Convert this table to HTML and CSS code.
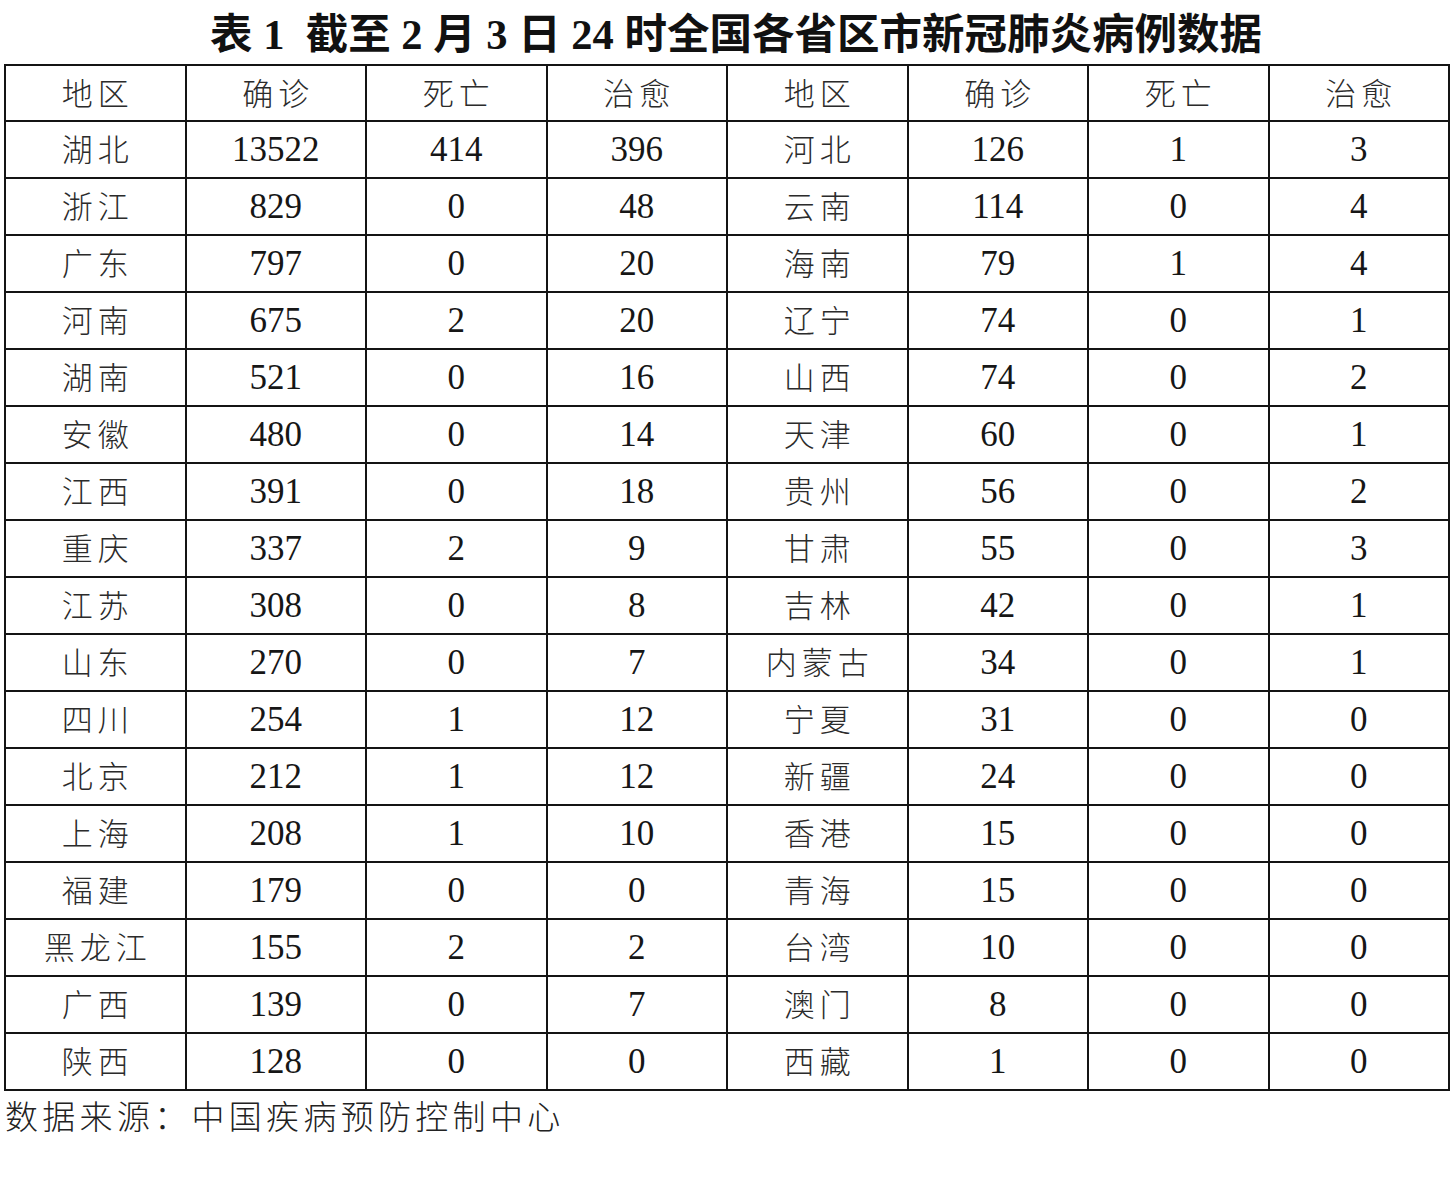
FILE: index.html
```html
<!DOCTYPE html>
<html lang="zh-CN">
<head>
<meta charset="utf-8">
<title>表1 新冠肺炎病例数据</title>
<link rel="stylesheet" href="styles.css">
</head>
<body>
<div class="page">
  <h1 class="title">表 1&nbsp; 截至 2 月 3 日 24 时全国各省区市新冠肺炎病例数据</h1>
  <table class="data">
    <thead>
      <tr><th>地区</th><th>确诊</th><th>死亡</th><th>治愈</th><th>地区</th><th>确诊</th><th>死亡</th><th>治愈</th></tr>
    </thead>
    <tbody>
      <tr><td class="cn">湖北</td><td>13522</td><td>414</td><td>396</td><td class="cn">河北</td><td>126</td><td>1</td><td>3</td></tr>
      <tr><td class="cn">浙江</td><td>829</td><td>0</td><td>48</td><td class="cn">云南</td><td>114</td><td>0</td><td>4</td></tr>
      <tr><td class="cn">广东</td><td>797</td><td>0</td><td>20</td><td class="cn">海南</td><td>79</td><td>1</td><td>4</td></tr>
      <tr><td class="cn">河南</td><td>675</td><td>2</td><td>20</td><td class="cn">辽宁</td><td>74</td><td>0</td><td>1</td></tr>
      <tr><td class="cn">湖南</td><td>521</td><td>0</td><td>16</td><td class="cn">山西</td><td>74</td><td>0</td><td>2</td></tr>
      <tr><td class="cn">安徽</td><td>480</td><td>0</td><td>14</td><td class="cn">天津</td><td>60</td><td>0</td><td>1</td></tr>
      <tr><td class="cn">江西</td><td>391</td><td>0</td><td>18</td><td class="cn">贵州</td><td>56</td><td>0</td><td>2</td></tr>
      <tr><td class="cn">重庆</td><td>337</td><td>2</td><td>9</td><td class="cn">甘肃</td><td>55</td><td>0</td><td>3</td></tr>
      <tr><td class="cn">江苏</td><td>308</td><td>0</td><td>8</td><td class="cn">吉林</td><td>42</td><td>0</td><td>1</td></tr>
      <tr><td class="cn">山东</td><td>270</td><td>0</td><td>7</td><td class="cn">内蒙古</td><td>34</td><td>0</td><td>1</td></tr>
      <tr><td class="cn">四川</td><td>254</td><td>1</td><td>12</td><td class="cn">宁夏</td><td>31</td><td>0</td><td>0</td></tr>
      <tr><td class="cn">北京</td><td>212</td><td>1</td><td>12</td><td class="cn">新疆</td><td>24</td><td>0</td><td>0</td></tr>
      <tr><td class="cn">上海</td><td>208</td><td>1</td><td>10</td><td class="cn">香港</td><td>15</td><td>0</td><td>0</td></tr>
      <tr><td class="cn">福建</td><td>179</td><td>0</td><td>0</td><td class="cn">青海</td><td>15</td><td>0</td><td>0</td></tr>
      <tr><td class="cn">黑龙江</td><td>155</td><td>2</td><td>2</td><td class="cn">台湾</td><td>10</td><td>0</td><td>0</td></tr>
      <tr><td class="cn">广西</td><td>139</td><td>0</td><td>7</td><td class="cn">澳门</td><td>8</td><td>0</td><td>0</td></tr>
      <tr><td class="cn">陕西</td><td>128</td><td>0</td><td>0</td><td class="cn">西藏</td><td>1</td><td>0</td><td>0</td></tr>
    </tbody>
  </table>
  <p class="source">数据来源：中国疾病预防控制中心</p>
</div>
</body>
</html>
```

FILE: styles.css
```css
html, body {
  margin: 0;
  padding: 0;
  background: #ffffff;
}

.page {
  padding: 0 8px 0 4px;
  color: #1a1a1a;
  font-family: "Liberation Serif", "Noto Sans CJK SC", serif;
}

.title {
  margin: 0;
  height: 64px;
  line-height: 70px;
  font-size: 42.5px;
  font-weight: 700;
  text-align: center;
  padding-left: 20px;
  white-space: nowrap;
  color: #111;
}

.data {
  width: 1446px;
  border-collapse: collapse;
  table-layout: fixed;
}

.data th,
.data td {
  border: 2px solid #141414;
  height: 55px;
  padding: 0;
  text-align: center;
  vertical-align: middle;
  font-size: 35px;
  line-height: 40px;
  font-weight: 400;
  color: #161616;
}

.data th {
  height: 51px;
}

.data th,
.data td.cn {
  font-family: "Noto Sans CJK SC", sans-serif;
  font-weight: 300;
  font-size: 31px;
  line-height: 36px;
  letter-spacing: 5px;
  text-indent: 5px;
  padding-bottom: 3px;
  color: #2b2b2b;
}

.data td.cn {
  height: 52px;
}

.source {
  margin: 2px 0 0 1px;
  font-family: "Noto Sans CJK SC", sans-serif;
  font-weight: 300;
  font-size: 33px;
  letter-spacing: 4.3px;
  color: #222;
  line-height: 44px;
}
```
